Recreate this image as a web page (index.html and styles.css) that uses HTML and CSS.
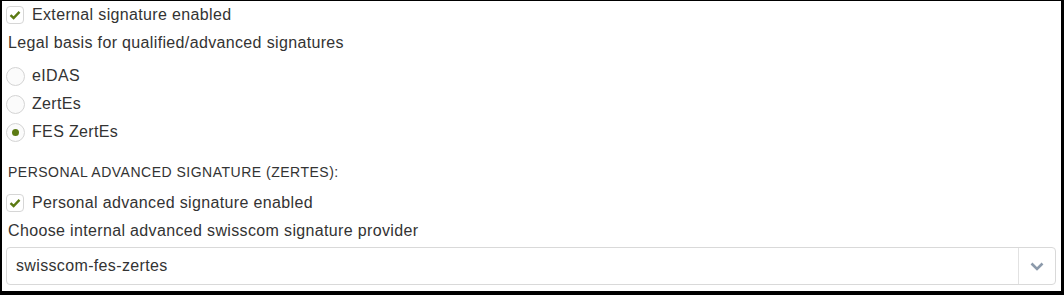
FILE: index.html
```html
<!DOCTYPE html>
<html lang="en">

<head>
    <meta charset="UTF-8">
    <title>Signature settings</title>
    <link rel="stylesheet" href="styles.css">
</head>

<body>
    <div class="frame">
        <label class="check_row">
            <span class="check_box">
                <svg width="12" height="10" viewBox="0 0 12 10"><path d="M1.5 5.2 L4.6 8 L10.5 1.8" fill="none" stroke="#5b7a12" stroke-width="2.4"/></svg>
            </span>
            External signature enabled
        </label>
        <div class="field_label">Legal basis for qualified/advanced signatures</div>
        <div class="radio_group">
            <label class="radio_row"><span class="radio"></span>eIDAS</label>
            <label class="radio_row"><span class="radio"></span>ZertEs</label>
            <label class="radio_row"><span class="radio checked"></span>FES ZertEs</label>
        </div>
        <div class="section_title">PERSONAL ADVANCED SIGNATURE (ZERTES):</div>
        <label class="check_row second">
            <span class="check_box">
                <svg width="12" height="10" viewBox="0 0 12 10"><path d="M1.5 5.2 L4.6 8 L10.5 1.8" fill="none" stroke="#5b7a12" stroke-width="2.4"/></svg>
            </span>
            Personal advanced signature enabled
        </label>
        <div class="field_label">Choose internal advanced swisscom signature provider</div>
        <div class="select">
            <span class="select_value">swisscom-fes-zertes</span>
            <span class="select_arrow">
                <svg width="14" height="9" viewBox="0 0 14 9"><path d="M1.5 1.5 L7 7 L12.5 1.5" fill="none" stroke="#8c9aab" stroke-width="2.6"/></svg>
            </span>
        </div>
    </div>
</body>

</html>
```

FILE: styles.css
```css
html,body {
    margin: 0;
    padding: 0;
}
body {
    font-family: 'Liberation Sans', Arial, sans-serif;
    font-size: 16px;
    letter-spacing: 0.35px;
    color: #333333;
    background-color: #ffffff;
}
.frame {
    box-sizing: border-box;
    width: 1064px;
    height: 295px;
    border-left: 2px solid #000;
    border-top: 1px solid #000;
    border-right: 3px solid #000;
    border-bottom: 4px solid #000;
    padding: 0 5px 0 4px;
}
.check_row {
    display: flex;
    align-items: center;
    height: 28px;
}
.check_row.second {
    margin-top: 5px;
}
.check_box {
    box-sizing: border-box;
    width: 18px;
    height: 18px;
    margin-right: 8px;
    border: 1px solid #d6d6d6;
    border-radius: 4px;
    display: flex;
    align-items: center;
    justify-content: center;
}
.field_label {
    height: 28px;
    line-height: 28px;
    padding-left: 2px;
}
.radio_group {
    margin-top: 5px;
}
.radio_row {
    display: flex;
    align-items: center;
    height: 28px;
}
.radio {
    box-sizing: border-box;
    width: 19px;
    height: 19px;
    margin-right: 7px;
    border: 1px solid #d4d4d4;
    border-radius: 50%;
    background-color: #fbfbfb;
    display: flex;
    align-items: center;
    justify-content: center;
}
.radio.checked::after {
    content: '';
    width: 7px;
    height: 7px;
    border-radius: 50%;
    background-color: #5b7a12;
}
.section_title {
    margin-top: 14px;
    height: 24px;
    line-height: 24px;
    font-size: 14px;
    letter-spacing: 0.5px;
    padding-left: 2px;
}
.select {
    box-sizing: border-box;
    margin-top: 2px;
    height: 38px;
    border: 1px solid #d9d9d9;
    border-radius: 4px;
    display: flex;
    align-items: center;
}
.select_value {
    flex: 1;
    padding-left: 9px;
}
.select_arrow {
    width: 36px;
    height: 100%;
    border-left: 1px solid #e2e2e2;
    display: flex;
    align-items: center;
    justify-content: center;
}
```
